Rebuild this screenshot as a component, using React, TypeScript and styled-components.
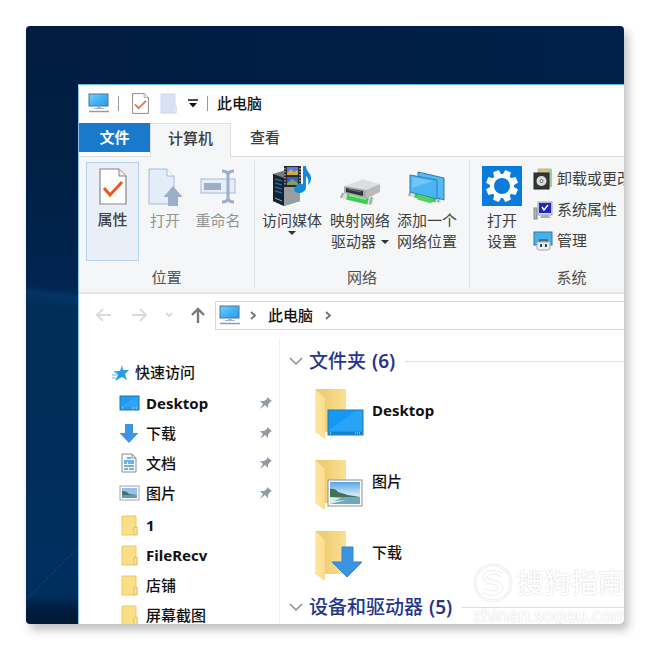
import React from "react";
import styled, { createGlobalStyle } from "styled-components";

const GlobalStyle = createGlobalStyle`
  * { box-sizing: border-box; }
  body {
    margin: 0;
    background: #fff;
    font-family: "Noto Sans", "Noto Sans CJK SC", sans-serif;
    font-size: 15px;
    line-height: 21px;
    color: #1c1c1c;
  }
  button {
    margin: 0;
    padding: 0;
    border: 0;
    background: none;
    font: inherit;
    color: inherit;
    cursor: pointer;
  }
  ul { margin: 0; padding: 0; list-style: none; }
  h1, h2 { margin: 0; font: inherit; }
  a { color: inherit; text-decoration: none; }
  svg { display: block; flex: none; }
`;

const Page = styled.div`
  min-height: 100vh;
  padding: 26px;
`;

const Desktop = styled.main`
  position: relative;
  display: flex;
  height: calc(100vh - 52px);
  min-height: 300px;
  padding: 58px 0 0 52px;
  border-radius: 4px;
  overflow: hidden;
  background:
    linear-gradient(186deg, transparent 44%, rgba(10, 70, 125, 0.4) 45%, transparent 47%) 0 0 / 52px 100% no-repeat,
    linear-gradient(315deg, transparent 49%, rgba(40, 110, 160, 0.18) 50%, transparent 52%) 0 522px / 52px 52px no-repeat,
    linear-gradient(180deg, #001d40 0%, #001f42 20%, #002550 43%, #002c58 46%, #002f5f 95%, #001a3b 98%, #001836 100%) 0 0 / 52px 100% no-repeat,
    linear-gradient(90deg, #001d40, #00204a);
`;

const Shadow = styled.div`
  border-radius: 4px;
  box-shadow: 4px 6px 10px rgba(0, 0, 0, 0.25);
`;

const Window = styled.section`
  flex: 1;
  min-width: 0;
  display: flex;
  flex-direction: column;
  overflow: hidden;
  background: #fff;
  border-top: 1px solid #62b5e8;
  border-left: 1px solid #8cc8f0;
`;

const TitleBar = styled.header`
  flex: none;
  display: flex;
  align-items: center;
  height: 38px;
  padding: 0 0 2px 9px;
  color: #151515;
`;

const QuickTools = styled.div`
  display: flex;
  align-items: center;
  gap: 11px;
  margin: 0 9px 0 8px;
  padding: 0 9px 0 13px;
  border: solid #9a9a9a;
  border-width: 0 1px;
  height: 15px;
`;

const Title = styled.h1`
  font-weight: 500;
`;

const Tabs = styled.div`
  flex: none;
  display: flex;
  height: 34px;
  box-shadow: inset 0 -1px #dcdfe2;
`;

const Tab = styled.button<{ $kind: "file" | "active" | "plain" }>`
  font-weight: ${(p) => (p.$kind === "file" ? 700 : 500)};
  width: ${(p) => (p.$kind === "file" ? 71 : p.$kind === "active" ? 81 : 68)}px;
  height: ${(p) => (p.$kind === "active" ? 34 : 29)}px;
  color: ${(p) => (p.$kind === "file" ? "#fff" : "#3c3c3c")};
  background: ${(p) => (p.$kind === "file" ? "#1979ca" : p.$kind === "active" ? "#f5f6f7" : "transparent")};
  border: solid #dcdfe2;
  border-width: ${(p) => (p.$kind === "active" ? "1px 1px 0" : "0")};
  padding-bottom: ${(p) => (p.$kind === "active" ? 4 : 0)}px;
`;

const Ribbon = styled.div`
  flex: none;
  display: flex;
  height: 137px;
  background: #f5f6f7;
  border-bottom: 2px solid #e3e5e7;
`;

const Group = styled.section<{ $width: number }>`
  flex: none;
  display: flex;
  flex-direction: column;
  width: ${(p) => p.$width}px;
  margin: 4px 0;
  border-right: 1px solid #e0e2e4;
`;

const GroupTools = styled.div<{ $inset: number }>`
  flex: none;
  display: flex;
  height: 101px;
  padding: 1px 0 1px ${(p) => p.$inset}px;
`;

const GroupName = styled.h2`
  padding-top: 5px;
  text-align: center;
  color: #505050;
`;

const Tool = styled.button<{ $width: number; $selected?: boolean; $dim?: boolean }>`
  flex: none;
  display: flex;
  flex-direction: column;
  align-items: center;
  width: ${(p) => p.$width}px;
  padding-top: ${(p) => (p.$selected || p.$dim ? 5 : 3)}px;
  border: 1px solid ${(p) => (p.$selected ? "#b5d3ef" : "transparent")};
  background: ${(p) => (p.$selected ? "#e8eff7" : "transparent")};
  color: ${(p) => (p.$dim ? "#939393" : "#3f3f3f")};
  font-weight: ${(p) => (p.$selected ? 500 : 400)};
  white-space: nowrap;

  > svg { margin-bottom: 4px; }
`;

const LabelLine = styled.span`
  display: flex;
  align-items: center;
  gap: 5px;
`;

const Caret = styled.span`
  width: 0;
  height: 0;
  border: solid transparent;
  border-width: 4px 4px 0;
  border-top-color: #333;
`;

const SmallTools = styled.div`
  display: flex;
  flex-direction: column;
  padding: 1px 0 0 6px;
`;

const SmallTool = styled.button`
  flex: none;
  display: flex;
  align-items: center;
  gap: 4px;
  height: 31px;
  color: #3f3f3f;
  white-space: nowrap;
`;

const AddressRow = styled.div`
  flex: none;
  display: flex;
  align-items: center;
  height: 44px;
  padding: 0 0 2px 16px;
`;

const NavButtons = styled.div`
  display: flex;
  align-items: center;
  gap: 17px;
  margin-right: 9px;

  button:first-child { margin-right: 4px; }
`;

const AddressBox = styled.nav`
  flex: 1;
  display: flex;
  align-items: center;
  gap: 12px;
  height: 29px;
  padding-left: 3px;
  border: 1px solid #d9d9d9;
  border-right: 0;
  color: #111;
  font-weight: 500;
  white-space: nowrap;

  svg + svg { margin-left: -3px; }
`;

const Body = styled.div`
  flex: 1;
  display: flex;
  min-height: 0;
`;

const Sidebar = styled.nav`
  flex: none;
  width: 201px;
  padding-top: 19px;
  border-right: 1px solid #f0f0f0;
  font-weight: 500;
  color: #111;
`;

const QuickAccess = styled.a`
  display: flex;
  align-items: center;
  gap: 5px;
  height: 31px;
  padding-left: 32px;
`;

const NavList = styled.ul`
  margin-bottom: 2px;
`;

const NavLink = styled.a<{ $latin?: boolean }>`
  display: flex;
  align-items: center;
  gap: 6px;
  height: 30px;
  padding: 0 6px 0 40px;
  font-weight: ${(p) => (p.$latin ? 700 : 500)};

  > span { flex: 1; white-space: nowrap; }
`;

const Content = styled.div`
  flex: 1;
  min-width: 0;
  padding: 10px 0 0 9px;
`;

const SectionHead = styled.button`
  display: flex;
  align-items: center;
  gap: 6px;
  width: 100%;
  height: 26px;
  color: #26358c;
  font-size: 19px;
  line-height: 26px;
  font-weight: 500;
  white-space: nowrap;

  &::after {
    content: "";
    flex: 1;
    margin-left: 4px;
    border-top: 1px solid #dedede;
  }
`;

const Count = styled.span`
  font-weight: 600;
`;

const Files = styled.ul`
  display: grid;
  gap: 19px;
  padding: 14px 0 12px 25px;
`;

const FileLink = styled.a<{ $latin?: boolean }>`
  display: flex;
  align-items: flex-start;
  gap: 8px;
  color: #111;
  font-weight: ${(p) => (p.$latin ? 700 : 500)};

  > span { padding-top: 12px; }
`;

const Watermark = styled.div`
  position: absolute;
  left: 447px;
  bottom: -2px;
  color: #fff;
  font-size: 18px;
  line-height: 22px;
  white-space: nowrap;
  pointer-events: none;
  text-shadow: 0 0 2px rgba(0, 0, 0, 0.2);
`;

const WatermarkBrand = styled.div`
  display: flex;
  align-items: center;
  gap: 4px;
  height: 42px;
  font-size: 27px;
`;

const Computer = () => (
  <svg width="22" height="20" viewBox="0 0 22 20">
    <defs>
      <linearGradient id="screen" x1="0" y1="0" x2="1" y2="1">
        <stop offset="0" stopColor="#7fd0fb" />
        <stop offset="0.5" stopColor="#43b3f6" />
        <stop offset="1" stopColor="#2b9dea" />
      </linearGradient>
    </defs>
    <rect x="1" y="1" width="19" height="12" fill="url(#screen)" stroke="#4b7796" />
    <path d="M9 14h4v1h3v1H6v-1h3z" fill="#9fb6c6" />
    <path d="M1 18.500h20" stroke="#9b9b9b" strokeWidth="1.500" />
  </svg>
);

const CheckedPage = ({ small }: { small?: boolean }) => (
  <svg width={small ? 17 : 28} height={small ? 21 : 37} viewBox="0 0 28 37" preserveAspectRatio="none">
    <path d="M1 1h19l7 7v28H1z" fill="#fff" stroke="#858585" strokeWidth={small ? 1.6 : 1.2} />
    <path d="M20 1v7h7" fill="#ededed" stroke="#858585" />
    <path d="m5 20 6 7 12-13" fill="none" stroke={small ? "#e8734a" : "#ec5a1d"} strokeWidth="3" />
  </svg>
);

const BluePage = () => (
  <svg width="17" height="21" viewBox="0 0 17 21">
    <path d="M1 1h14v12h1v7H1z" fill="#d9e2f5" stroke="#ccd8ed" />
    <path d="M13 20v-7h3v7z" fill="#e6edf9" stroke="#ccd8ed" />
  </svg>
);

const Overflow = () => (
  <svg width="10" height="9" viewBox="0 0 10 9">
    <path d="M0 1h10" stroke="#111" strokeWidth="1.500" />
    <path d="M1 4h8L5 8.500z" fill="#111" />
  </svg>
);

const OpenPage = () => (
  <svg width="36" height="38" viewBox="0 0 36 38">
    <path d="M2 1h18l7 7v28H2z" fill="#e3edfa" stroke="#a9bad6" />
    <path d="M20 1v7h7" fill="#f7faff" stroke="#a9bad6" />
    <path d="M26 18 35.500 29H31v9H21v-9h-4.500z" fill="#9dadca" />
  </svg>
);

const Rename = () => (
  <svg width="36" height="38" viewBox="0 0 36 38">
    <rect x="1" y="11" width="34" height="14" fill="#e6eef9" stroke="#a9bad6" />
    <rect x="4" y="15" width="17" height="7" fill="#9dadca" />
    <path d="M22 3q6 0 6 4.500v22q0 4.500-6 4.500M34 3q-6 0-6 4.500v22q0 4.500 6 4.500" fill="none" stroke="#9dadca" strokeWidth="3" />
  </svg>
);

const Media = () => (
  <svg width="42" height="40" viewBox="0 0 42 40">
    <path d="m2 8 16-5 11 5v27l-16 5L2 35z" fill="#777b80" />
    <path d="m2 8 11 4v28L2 35z" fill="#17212c" />
    <path d="m13 12 16-4v27l-16 5z" fill="#9a9da0" />
    <path d="m4 13 7 2m-7 2 7 2m-7 2 7 2m-7 2 7 2" stroke="#1b68a5" strokeWidth="1.500" />
    <path d="m4 32 7 3" stroke="#4cc5ee" />
    <rect x="13" y="0" width="17" height="21" fill="#252830" />
    <path d="M14 2v18M29 2v18" stroke="#ddd" strokeDasharray="1.500 1.500" />
    <rect x="16" y="1" width="11" height="8" fill="#557cdf" />
    <path d="m16 7 4-4 3 3 4-2v5H16z" fill="#d3a83c" />
    <rect x="16" y="11" width="11" height="8" fill="#365cd3" />
    <path d="m16 17 5-4 6 4v2H16z" fill="#819d59" />
    <path d="M32 0h3c0 6 6 7 5 14-1 3-2 4-3 5 1-5 0-7-2-9v11c0 4-4 6-7 6-4 0-6-3-4-6 2-3 5-4 8-3z" fill="#118cd8" />
  </svg>
);

const Cable = () => (
  <>
    <path d="m3 27 30 7" stroke="#d8dfdb" strokeWidth="7" />
    <path d="m7 28 21 5" stroke="#3fca55" strokeWidth="7" />
    <path d="m9 27 17 4" stroke="#8be88e" strokeWidth="2" />
    <path d="m3 25-2 5m31-1-2 7" stroke="#9ca9a3" strokeWidth="2" />
  </>
);

const NetworkDrive = () => (
  <svg width="42" height="40" viewBox="0 0 42 40">
    <g transform="translate(1 2)"><Cable /></g>
    <path d="m5 20 19-7 17 5-14 7z" fill="#dddedf" />
    <path d="m5 20 22 4v8L5 27z" fill="#a7a9aa" />
    <path d="m27 24 14-6v8l-14 7z" fill="#b9babb" />
    <path d="m7 22 17 3v5L7 26z" fill="#303336" />
    <path d="m9 23 13 3" stroke="#777" />
    <path d="m5 20 19-7 17 5" fill="none" stroke="#efefef" />
  </svg>
);

const NetworkPlace = () => (
  <svg width="38" height="40" viewBox="0 0 38 40">
    <Cable />
    <path d="m10 6 26 6v22l-26-8z" fill="#52b9f2" stroke="#287fb3" />
    <path d="m2 9 27 5v19L2 26z" fill="#4bb5f4" stroke="#287fb3" />
    <path d="m4 11 21 4L4 22z" fill="#8ed5fa" opacity="0.550" />
    <path d="m10 31 14 4" stroke="#4fd463" strokeWidth="5" />
  </svg>
);

const Settings = () => (
  <svg width="40" height="40" viewBox="0 0 40 40">
    <rect width="40" height="40" fill="#087bdc" />
    <g transform="translate(20 20)" fill="#fff">
      {[0, 45, 90, 135, 180, 225, 270, 315].map((angle) => (
        <path key={angle} d="M-4-10-3-16H3L4-10z" transform={`rotate(${angle + 22.5})`} />
      ))}
      <circle r="12" />
      <circle r="8" fill="#087bdc" />
    </g>
  </svg>
);

const Uninstall = () => (
  <svg width="20" height="22" viewBox="0 0 20 22">
    <path d="M5 1h13v18H7z" fill="#d9c47c" stroke="#b9b8a1" />
    <path d="M15 1h4v18h-4z" fill="#9bcf9c" />
    <rect x="1" y="5" width="15" height="16" fill="#33363a" stroke="#222" />
    <circle cx="8.500" cy="13" r="5" fill="#dedfd8" />
    <circle cx="8.500" cy="13" r="2" fill="#777" />
    <circle cx="8.500" cy="13" r="1" fill="#fff" />
  </svg>
);

const SystemProps = () => (
  <svg width="20" height="20" viewBox="0 0 20 20">
    <rect x="1" y="8" width="3" height="11" fill="#aeb4bb" stroke="#808891" />
    <rect x="5" y="2" width="14" height="13" fill="#d3d7df" stroke="#a0a5b1" />
    <rect x="6" y="3" width="12" height="10" fill="#1a28bd" />
    <path d="m9 7 2 3 4-5" fill="none" stroke="#fff" strokeWidth="1.500" />
    <path d="M9 15h6l3 3H7z" fill="#a7adbb" />
  </svg>
);

const Manage = () => (
  <svg width="20" height="20" viewBox="0 0 20 20">
    <rect x="1" y="1" width="18" height="13" fill="#43b1ed" stroke="#36779c" />
    <path d="M7 11V9h7v2" fill="none" stroke="#53585c" strokeWidth="1.500" />
    <path d="M4 11h13v7l-2 1H6l-2-1z" fill="#edf0f1" stroke="#a4abb0" />
    <path d="M8 13v3m5-3v3" stroke="#344c5d" strokeWidth="2" />
  </svg>
);

const Arrow = ({ dir }: { dir: "left" | "right" | "up" }) => (
  <svg width="16" height="16" viewBox="0 0 16 16">
    <path
      d={dir === "up" ? "M8 16V2M2 8l6-6 6 6" : dir === "left" ? "M16 8H2M8 2 2 8l6 6" : "M0 8h14M8 2l6 6-6 6"}
      fill="none"
      stroke={dir === "up" ? "#787878" : "#dadada"}
      strokeWidth={dir === "up" ? 2.4 : 1.8}
    />
  </svg>
);

const Chevron = ({ kind }: { kind: "recent" | "path" | "section" }) => {
  if (kind === "path")
    return (
      <svg width="6" height="9" viewBox="0 0 6 9"><path d="m1 1 4 3.500L1 8" fill="none" stroke="#707070" strokeWidth="1.800" /></svg>
    );
  return kind === "recent" ? (
    <svg width="8" height="6" viewBox="0 0 8 6"><path d="m1 1 3 3 3-3" fill="none" stroke="#cfcfcf" strokeWidth="1.500" /></svg>
  ) : (
    <svg width="14" height="9" viewBox="0 0 14 9"><path d="m1 1 6 6 6-6" fill="none" stroke="#8c8c8c" strokeWidth="1.500" /></svg>
  );
};

const Star = () => (
  <svg width="19" height="18" viewBox="0 0 19 18">
    <path d="m11 1 1 5 6 0-4 4 2 6-5-3-7 4 3-6-4-4 6 0z" fill="#279fe2" />
    <path d="M3 8h4M1 11h5M1 14h4" stroke="#5cb9e9" />
  </svg>
);

const Pin = () => (
  <svg width="14" height="14" viewBox="0 0 14 14">
    <path d="m8 1 5 4-2 1-2 3v3L6 9l-5 4 3-5-3-3 4 0 3-2z" fill="#929aa3" />
  </svg>
);

const Screen = () => (
  <svg width="21" height="16" viewBox="0 0 21 16">
    <rect x="1" y="1" width="19" height="14" fill="#229bf0" stroke="#197abb" />
    <path d="M2 11 17 2h2v10H2z" fill="#40aff7" opacity="0.500" />
    <path d="M3 13h2m8 0h5" stroke="#d4efff" strokeDasharray="1 1" />
  </svg>
);

const Download = () => (
  <svg width="21" height="21" viewBox="0 0 21 21">
    <path d="M6 1h8v9h5.500L10 20 .5 10H6z" fill="#3d95df" />
  </svg>
);

const Document = () => (
  <svg width="21" height="20" viewBox="0 0 21 20">
    <path d="M3 1h10l4 4v14H3z" fill="#f7fbfd" stroke="#83909a" />
    <path d="M13 1v4h4" fill="none" stroke="#83909a" />
    <path d="M8 5h4M5 8h10M5 10h3m1 0h6M5 13h10M5 16h4m1 0h5" stroke="#499cc8" strokeWidth="1.300" />
  </svg>
);

const Picture = () => (
  <svg width="21" height="16" viewBox="0 0 21 16">
    <rect x="1" y="1" width="19" height="14" fill="#fff" stroke="#a0a5a9" />
    <rect x="3" y="3" width="15" height="10" fill="#93c3ed" />
    <path d="M3 6q5 0 7 3l8 1v1H3z" fill="#3f7268" />
    <path d="M3 10h15v3H3z" fill="#6697bc" />
  </svg>
);

const SmallFolder = () => (
  <svg width="21" height="21" viewBox="0 0 21 21">
    <path d="M3 1h14v11h1v8H3z" fill="#fadf86" stroke="#e9c968" />
    <path d="M15 19.500v-7h3v7z" fill="#fbe69c" stroke="#e4c263" />
  </svg>
);

const BigFolder = ({ kind }: { kind: "screen" | "picture" | "download" }) => (
  <svg width="50" height="52" viewBox="0 0 50 52">
    <defs>
      <linearGradient id="flap" x1="0" x2="1">
        <stop stopColor="#ffe8a3" />
        <stop offset="1" stopColor="#fbdc8c" />
      </linearGradient>
      <linearGradient id="back" x1="0" x2="1">
        <stop offset="0.300" stopColor="#efcd74" />
        <stop offset="1" stopColor="#fae095" />
      </linearGradient>
      <linearGradient id="sky" x1="0" y1="0" x2="0" y2="1">
        <stop stopColor="#5aa5e6" />
        <stop offset="0.600" stopColor="#d5eafa" />
      </linearGradient>
    </defs>
    <path d="M1 1h31v43H8z" fill="url(#back)" />
    <path d="m1 1 10 9v41L1 44z" fill="url(#flap)" />
    {kind === "screen" && (
      <>
        <rect x="14" y="22" width="35" height="25" fill="#1698f5" stroke="#2279ad" />
        <path d="M15 42 42 23h6v20H15z" fill="#4bb8ff" opacity="0.350" />
        <path d="M15 45h33" stroke="#146da9" />
        <path d="M16 45h2m23 0h6" stroke="#e3f5ff" strokeDasharray="1 1" />
      </>
    )}
    {kind === "picture" && (
      <>
        <rect x="14" y="21" width="34" height="26" fill="#fff" stroke="#8c9297" />
        <rect x="16" y="23" width="30" height="22" fill="url(#sky)" />
        <path d="M16 30q5-1 8 3l10 3 12 2v1H16z" fill="#42725b" />
        <path d="M16 38h30v7H16z" fill="#6fa7c2" />
        <path d="m16 38 11 1-7 3 12-1-16 4z" fill="#dfebe9" />
      </>
    )}
    {kind === "download" && <path d="M28 17h11v15h9L33 47 18 32h10z" fill="#3995e3" stroke="#3483c6" />}
  </svg>
);

const Sogou = () => (
  <svg width="40" height="42" viewBox="0 0 40 42">
    <g fill="none" stroke="#eee" strokeWidth="3">
      <circle cx="20" cy="21" r="18" />
      <path d="M29 13q-7-4-13-2c-7 3-4 8 3 9 9 2 12 6 5 10-5 2-10 1-14-2" strokeWidth="5" />
    </g>
    <g fill="none" stroke="#fff">
      <circle cx="20" cy="21" r="18" />
      <path d="M29 13q-7-4-13-2c-7 3-4 8 3 9 9 2 12 6 5 10-5 2-10 1-14-2" strokeWidth="3" />
    </g>
  </svg>
);

const pinned = [
  { name: "Desktop", icon: <Screen />, latin: true },
  { name: "下载", icon: <Download /> },
  { name: "文档", icon: <Document /> },
  { name: "图片", icon: <Picture /> },
];

const recent = [{ name: "1", latin: true }, { name: "FileRecv", latin: true }, { name: "店铺" }, { name: "屏幕截图" }];

const folders: { name: string; kind: "screen" | "picture" | "download"; latin?: boolean }[] = [
  { name: "Desktop", kind: "screen", latin: true },
  { name: "图片", kind: "picture" },
  { name: "下载", kind: "download" },
];

export default function App() {
  return (
    <Page>
      <GlobalStyle />
      <Shadow>
        <Desktop>
          <Window>
            <TitleBar>
              <Computer />
              <QuickTools>
                <button aria-label="属性"><CheckedPage small /></button>
                <button aria-label="新建文件夹"><BluePage /></button>
                <button aria-label="自定义快速访问工具栏"><Overflow /></button>
              </QuickTools>
              <Title>此电脑</Title>
            </TitleBar>
            <Tabs>
              <Tab $kind="file">文件</Tab>
              <Tab $kind="active">计算机</Tab>
              <Tab $kind="plain">查看</Tab>
            </Tabs>
            <Ribbon>
              <Group $width={176}>
                <GroupTools $inset={7}>
                  <Tool $width={53} $selected><CheckedPage /><LabelLine>属性</LabelLine></Tool>
                  <Tool $width={52} $dim><OpenPage /><LabelLine>打开</LabelLine></Tool>
                  <Tool $width={54} $dim><Rename /><LabelLine>重命名</LabelLine></Tool>
                </GroupTools>
                <GroupName>位置</GroupName>
              </Group>
              <Group $width={215}>
                <GroupTools $inset={3}>
                  <Tool $width={68}><Media /><LabelLine>访问媒体</LabelLine><Caret /></Tool>
                  <Tool $width={68}><NetworkDrive /><LabelLine>映射网络</LabelLine><LabelLine>驱动器<Caret /></LabelLine></Tool>
                  <Tool $width={66}><NetworkPlace /><LabelLine>添加一个</LabelLine><LabelLine>网络位置</LabelLine></Tool>
                </GroupTools>
                <GroupName>网络</GroupName>
              </Group>
              <Group $width={204}>
                <GroupTools $inset={7}>
                  <Tool $width={50}><Settings /><LabelLine>打开</LabelLine><LabelLine>设置</LabelLine></Tool>
                  <SmallTools>
                    <SmallTool><Uninstall />卸载或更改程序</SmallTool>
                    <SmallTool><SystemProps />系统属性</SmallTool>
                    <SmallTool><Manage />管理</SmallTool>
                  </SmallTools>
                </GroupTools>
                <GroupName>系统</GroupName>
              </Group>
            </Ribbon>
            <AddressRow>
              <NavButtons>
                <button aria-label="后退"><Arrow dir="left" /></button>
                <button aria-label="前进"><Arrow dir="right" /></button>
                <button aria-label="最近浏览的位置"><Chevron kind="recent" /></button>
                <button aria-label="上移"><Arrow dir="up" /></button>
              </NavButtons>
              <AddressBox>
                <Computer />
                <Chevron kind="path" />
                <a href="#computer">此电脑</a>
                <Chevron kind="path" />
              </AddressBox>
            </AddressRow>
            <Body>
              <Sidebar>
                <QuickAccess href="#quick"><Star />快速访问</QuickAccess>
                <NavList>
                  {pinned.map((item) => (
                    <li key={item.name}>
                      <NavLink href="#pinned" $latin={item.latin}>{item.icon}<span>{item.name}</span><Pin /></NavLink>
                    </li>
                  ))}
                </NavList>
                <NavList>
                  {recent.map((item) => (
                    <li key={item.name}>
                      <NavLink href="#recent" $latin={item.latin}><SmallFolder /><span>{item.name}</span></NavLink>
                    </li>
                  ))}
                </NavList>
              </Sidebar>
              <Content>
                <SectionHead aria-expanded="true"><Chevron kind="section" />文件夹 <Count>(6)</Count></SectionHead>
                <Files>
                  {folders.map((item) => (
                    <li key={item.name}>
                      <FileLink href="#folder" $latin={item.latin}><BigFolder kind={item.kind} /><span>{item.name}</span></FileLink>
                    </li>
                  ))}
                </Files>
                <SectionHead aria-expanded="true"><Chevron kind="section" />设备和驱动器 <Count>(5)</Count></SectionHead>
              </Content>
            </Body>
          </Window>
          <Watermark>
            <WatermarkBrand><Sogou />搜狗指南</WatermarkBrand>
            zhinan.sogou.com
          </Watermark>
        </Desktop>
      </Shadow>
    </Page>
  );
}
